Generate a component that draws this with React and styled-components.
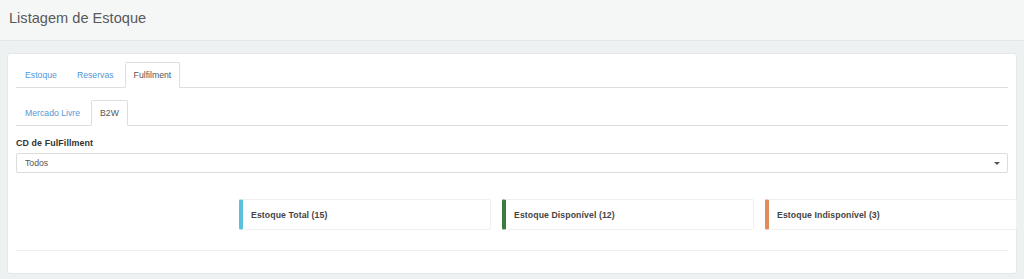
import React from "react";
import styled, { createGlobalStyle } from "styled-components";

const Global = createGlobalStyle`
  html, body { margin: 0; padding: 0; }
  body {
    background: #eef1f2;
    font-family: "Liberation Sans", Arial, sans-serif;
    color: #333;
  }
`;

const Page = styled.div`
  width: 1024px;
  min-height: 279px;
  background: #eef1f2;
`;

const Header = styled.header`
  background: #f5f7f7;
  border-bottom: 1px solid #e3e7e8;
  display: flex;
  align-items: center;
  padding: 0 9px;
  box-sizing: border-box;
  height: 41px;
`;

const Title = styled.h1`
  margin: 0;
  font-size: 14.6px;
  font-weight: 400;
  color: #595959;
  line-height: 1;
  margin-top: -3px;
`;

const Main = styled.main`
  padding: 12px 7px 7px 7px;
`;

const Card = styled.section`
  background: #fff;
  border: 1px solid #e3e7e8;
  border-radius: 3px;
  padding: 8px 8px 22px 8px;
`;

const TabBar = styled.ul`
  list-style: none;
  margin: 0;
  padding: 0;
  display: flex;
  border-bottom: 1px solid #dedede;
  height: 25px;
  margin-top: ${(p) => p.$mt || 0}px;
`;

const Tab = styled.li`
  box-sizing: border-box;
  height: 26px;
  margin-right: 2px;
  padding: 0 8px;
  border: 1px solid ${(p) => (p.$active ? "#dedede" : "transparent")};
  border-bottom-color: ${(p) => (p.$active ? "#fff" : "transparent")};
  border-radius: 2px 2px 0 0;
  background: ${(p) => (p.$active ? "#fff" : "transparent")};
  color: ${(p) => (p.$active ? "#555" : "#5598d6")};
  font-size: 8.7px;
  display: flex;
  align-items: center;
  cursor: pointer;
`;

const Field = styled.div`
  margin-top: 12px;
`;

const Label = styled.label`
  display: block;
  font-size: 8.9px;
  font-weight: 700;
  color: #333;
  margin-bottom: 5px;
  letter-spacing: 0.1px;
`;

const Select = styled.div`
  box-sizing: border-box;
  height: 20px;
  border: 1px solid #dcdcdc;
  border-radius: 2px;
  display: flex;
  align-items: center;
  justify-content: space-between;
  padding: 0 7px 0 8px;
  font-size: 8.7px;
  color: #555;
`;

const Caret = styled.span`
  width: 0;
  height: 0;
  border-left: 3px solid transparent;
  border-right: 3px solid transparent;
  border-top: 3px solid #555;
`;

const StatRow = styled.div`
  display: flex;
  justify-content: flex-end;
  gap: 11px;
  margin: 26px -9px 0 0;
`;

const Stat = styled.div`
  box-sizing: border-box;
  width: 252px;
  height: 31px;
  border: 1px solid #f0f0f0;
  border-left: 4px solid ${(p) => p.$color};
  border-radius: 2px;
  display: flex;
  align-items: center;
  padding-left: 8px;
  font-size: 8.7px;
  font-weight: 700;
  color: #444;
  letter-spacing: 0.1px;
`;

const Divider = styled.hr`
  border: 0;
  border-top: 1px solid #eeeeee;
  margin: 20px 0 0 0;
`;

export default function App() {
  return (
    <Page>
      <Global />
      <Header>
        <Title>Listagem de Estoque</Title>
      </Header>
      <Main>
        <Card>
          <TabBar>
            <Tab>Estoque</Tab>
            <Tab>Reservas</Tab>
            <Tab $active>Fulfilment</Tab>
          </TabBar>
          <TabBar $mt={12}>
            <Tab>Mercado Livre</Tab>
            <Tab $active>B2W</Tab>
          </TabBar>
          <Field>
            <Label>CD de FulFillment</Label>
            <Select>
              <span>Todos</span>
              <Caret />
            </Select>
          </Field>
          <StatRow>
            <Stat $color="#5bc0de">Estoque Total (15)</Stat>
            <Stat $color="#3d7a40">Estoque Disponível (12)</Stat>
            <Stat $color="#e38b5b">Estoque Indisponível (3)</Stat>
          </StatRow>
          <Divider />
        </Card>
      </Main>
    </Page>
  );
}
